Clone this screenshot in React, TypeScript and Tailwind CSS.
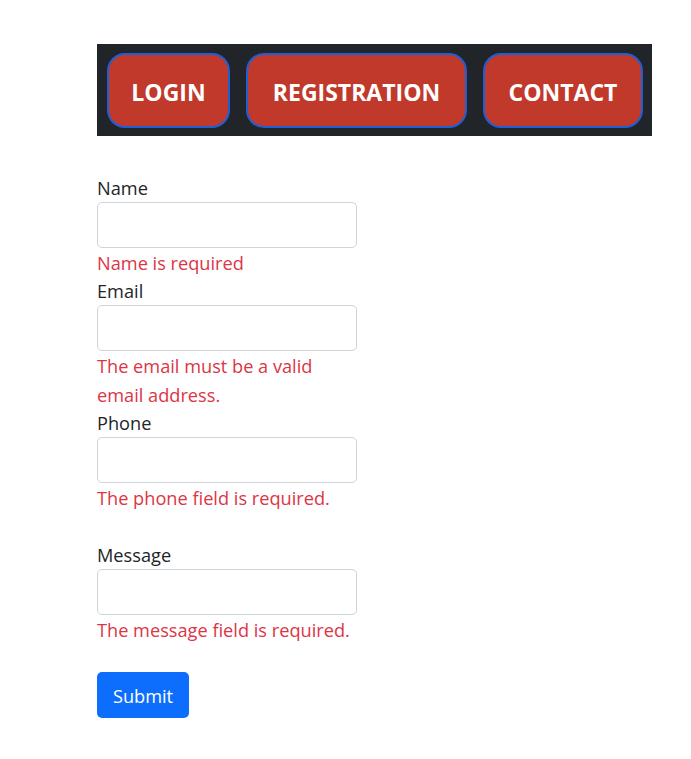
export default function App() {
  const font = { fontFamily: '"Open Sans", "Liberation Sans", sans-serif' };
  const Field = ({ label, error }: { label: string; error: string }) => (
    <div>
      <div className="h-[28px] text-[18.2px] leading-[29px] text-[#212529]">{label}</div>
      <div className="h-[46px] w-[260px] rounded-[5px] border border-[#ced4da] bg-white" />
      <div className="-mb-[1px] w-[260px] pt-[1px] text-[18.2px] leading-[29px] text-[#dc3545]">{error}</div>
    </div>
  );
  return (
    <div className="min-h-[759px] bg-white pl-[97px] pt-[44px]" style={font}>
      <nav className="flex h-[92px] w-[555px] items-start gap-[16px] bg-[#212529] pl-[10px] pt-[9px]">
        {['LOGIN', 'REGISTRATION', 'CONTACT'].map((t, i) => (
          <button
            key={t}
            className={`flex h-[75px] items-center justify-center rounded-[18px] border-2 border-[#1f5fd6] bg-[#c0392b] pt-[3px] text-[23px] font-bold text-white ${i === 0 ? 'w-[123px]' : i === 1 ? 'w-[221px]' : 'w-[160px]'}`}
          >
            {t}
          </button>
        ))}
      </nav>
      <form className="mt-[38px]">
        <Field label="Name" error="Name is required" />
        <Field label="Email" error="The email must be a valid email address." />
        <Field label="Phone" error="The phone field is required." />
        <div className="h-[29px]" />
        <Field label="Message" error="The message field is required." />
        <button type="button" className="mt-[28px] h-[46px] w-[92px] rounded-[5px] bg-[#0d6efd] pt-[3px] text-[18.2px] text-white">
          Submit
        </button>
      </form>
    </div>
  );
}
